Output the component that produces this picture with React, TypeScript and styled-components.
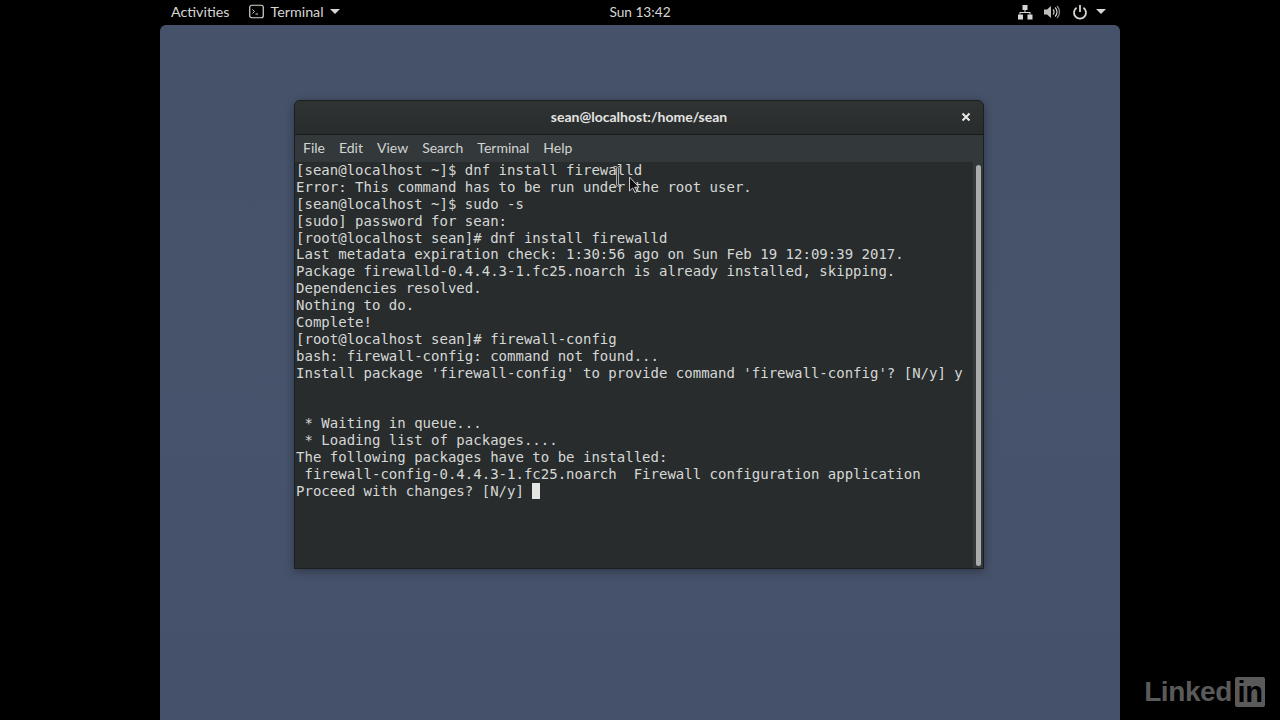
import styled, { createGlobalStyle } from 'styled-components'

const GlobalStyle = createGlobalStyle`
  html, body {
    margin: 0;
    padding: 0;
    width: 1280px;
    height: 720px;
    overflow: hidden;
    background: #000;
  }
`

const Screen = styled.div`
  position: relative;
  width: 1280px;
  height: 720px;
  background: #000;
  display: flex;
  flex-direction: column;
  overflow: hidden;
`
const TopBar = styled.header`
  height: 23px;
  padding-bottom: 2px;
  flex: none;
  display: grid;
  grid-template-columns: 1fr auto 1fr;
  align-items: center;
  padding-left: 171px;
  padding-right: 171px;
  color: #d6d6d3;
  font-family: Lato, sans-serif;
  font-size: 14.3px;
`
const BarLeft = styled.div`
  display: flex;
  align-items: center;
`
const BarItem = styled.span`
  display: flex;
  align-items: center;
  gap: 6px;
  margin-left: 20px;
  &:first-child {
    margin-left: 0;
  }
`
const Clock = styled.span`
  font-size: 13.7px;
`
const BarRight = styled.div`
  display: flex;
  align-items: center;
  justify-content: flex-end;
  gap: 9px;
  margin-right: 3px;
`
const Caret = styled.i<{ $gap?: number }>`
  display: block;
  width: 0;
  height: 0;
  margin-left: ${p => p.$gap ?? 0}px;
  border-left: 5px solid transparent;
  border-right: 5px solid transparent;
  border-top: 5px solid #d6d6d3;
`
const Desktop = styled.main`
  width: 960px;
  flex: 1;
  margin: 0 auto;
  box-sizing: border-box;
  padding: 75px 0 0 134px;
  border-radius: 6px 6px 0 0;
  background: linear-gradient(180deg, #45526a 0%, #46536b 50%, #45516a 100%);
`
const Window = styled.section`
  width: 690px;
  height: 469px;
  box-sizing: border-box;
  display: flex;
  flex-direction: column;
  border: 1px solid #1c1e1f;
  border-radius: 6px 6px 0 0;
  background: #2d3132;
  box-shadow: 0 2px 10px rgba(0, 0, 0, 0.35);
  overflow: hidden;
`
const TitleBar = styled.div`
  height: 30px;
  padding-bottom: 3px;
  flex: none;
  position: relative;
  display: flex;
  align-items: center;
  justify-content: center;
  background: linear-gradient(180deg, #2f3334, #292c2d);
  border-bottom: 1px solid #17191a;
  color: #e4e4e2;
  font-family: Lato, sans-serif;
  font-size: 14px;
  font-weight: 700;
`
const CloseButton = styled.button`
  position: absolute;
  right: 10px;
  top: 9px;
  width: 14px;
  height: 14px;
  padding: 0;
  border: none;
  background: none;
  display: flex;
  align-items: center;
  justify-content: center;
`
const MenuBar = styled.nav`
  height: 27px;
  padding: 0 8px 3px;
  box-sizing: border-box;
  flex: none;
  display: flex;
  align-items: center;
  gap: 14px;
  background: #33383a;
  color: #d2d4d2;
  font-family: Lato, sans-serif;
  font-size: 14px;
`
const TermArea = styled.div`
  flex: 1;
  display: flex;
  min-height: 0;
  background: #33383a;
`
const Term = styled.pre`
  flex: 1;
  margin: 0;
  padding: 0 0 0 1px;
  background: #282c2d;
  color: #d6d8d6;
  font-family: 'DejaVu Sans Mono', monospace;
  font-size: 14px;
  line-height: 16.88px;
  letter-spacing: 0.012px;
  white-space: pre;
  overflow: hidden;
`
const Block = styled.span`
  display: inline-block;
  width: 8px;
  height: 16px;
  vertical-align: -3px;
  background: #e4e6e4;
`
const ScrollTrack = styled.div`
  width: 10px;
  flex: none;
  display: flex;
  justify-content: center;
  padding: 3px 0 2px;
  box-sizing: border-box;
  background: #33383a;
`
const ScrollThumb = styled.div`
  width: 5px;
  height: 100%;
  border-radius: 3px;
  background: #a9acab;
`
const MouseCursors = styled.svg`
  position: absolute;
  left: 610px;
  top: 165px;
`
const Logo = styled.div`
  position: absolute;
  right: 15px;
  top: 677px;
  display: flex;
  align-items: center;
  gap: 3px;
  color: #5a5a5a;
  font-family: 'Liberation Sans', sans-serif;
  font-size: 28px;
  font-weight: 700;
  line-height: 30px;
  letter-spacing: -0.4px;
`
const LogoBox = styled.span`
  width: 30px;
  height: 30px;
  border-radius: 2px;
  background: #5a5a5a;
  color: #000;
  display: flex;
  align-items: flex-end;
  justify-content: center;
  font-size: 29px;
  line-height: 29px;
`

const lines = `[sean@localhost ~]$ dnf install firewalld
Error: This command has to be run under the root user.
[sean@localhost ~]$ sudo -s
[sudo] password for sean: 
[root@localhost sean]# dnf install firewalld
Last metadata expiration check: 1:30:56 ago on Sun Feb 19 12:09:39 2017.
Package firewalld-0.4.4.3-1.fc25.noarch is already installed, skipping.
Dependencies resolved.
Nothing to do.
Complete!
[root@localhost sean]# firewall-config
bash: firewall-config: command not found...
Install package 'firewall-config' to provide command 'firewall-config'? [N/y] y


 * Waiting in queue... 
 * Loading list of packages.... 
The following packages have to be installed:
 firewall-config-0.4.4.3-1.fc25.noarch  Firewall configuration application
Proceed with changes? [N/y] `

const menus = ['File', 'Edit', 'View', 'Search', 'Terminal', 'Help']

const App = (): JSX.Element => (
  <Screen>
    <GlobalStyle />
    <TopBar>
      <BarLeft>
        <BarItem>Activities</BarItem>
        <BarItem>
          <svg width="15" height="15" viewBox="0 0 15 15" fill="none">
            <rect x="0.75" y="1.25" width="13.5" height="12.5" rx="2" stroke="#d6d6d3" strokeWidth="1.2" />
            <path d="M3.5 5.5 L5.5 7.5 L3.5 9.5" stroke="#d6d6d3" strokeWidth="1" />
            <path d="M6.5 10 H9" stroke="#d6d6d3" strokeWidth="1" />
          </svg>
          Terminal
          <Caret />
        </BarItem>
      </BarLeft>
      <Clock>Sun 13:42</Clock>
      <BarRight>
        <svg width="16" height="16" viewBox="0 0 16 16" fill="#d6d6d3">
          <rect x="5.5" y="1" width="5" height="5" />
          <rect x="1" y="10.5" width="5" height="5" />
          <rect x="10.5" y="10.5" width="5" height="5" />
          <path d="M7.5 6h1v2h5v2.5h-1V9H3.5v1.5h-1V8h5z" />
        </svg>
        <svg width="17" height="16" viewBox="0 0 17 16" fill="none" style={{ marginLeft: 1 }}>
          <path d="M1 5.5h3L8 2v12L4 10.500H1z" fill="#bdbdba" />
          <path d="M10 5.500a3.500 3.500 0 0 1 0 5" stroke="#d6d6d3" strokeWidth="1.2" />
          <path d="M12 3.500a6 6 0 0 1 0 9" stroke="#d6d6d3" strokeWidth="1.2" />
          <path d="M14 2a8.500 8.500 0 0 1 0 12" stroke="#8d8d8a" strokeWidth="1.2" />
        </svg>
        <svg width="16" height="16" viewBox="0 0 16 16" fill="none" style={{ marginLeft: 3 }}>
          <path d="M4.600 3.700a6 6 0 1 0 6.800 0" stroke="#d6d6d3" strokeWidth="1.800" />
          <path d="M8 1v7" stroke="#d6d6d3" strokeWidth="1.800" />
        </svg>
        <Caret $gap={-1} />
      </BarRight>
    </TopBar>
    <Desktop>
      <Window>
        <TitleBar>
          sean@localhost:/home/sean
          <CloseButton aria-label="Close">
            <svg width="10" height="10" viewBox="0 0 10 10">
              <path d="M1.500 1.500 L8.500 8.500 M8.500 1.500 L1.500 8.500" stroke="#e8e8e6" strokeWidth="2" />
            </svg>
          </CloseButton>
        </TitleBar>
        <MenuBar>
          {menus.map(m => <span key={m}>{m}</span>)}
        </MenuBar>
        <TermArea>
          <Term>{lines}<Block /></Term>
          <ScrollTrack>
            <ScrollThumb />
          </ScrollTrack>
        </TermArea>
      </Window>
    </Desktop>
    <MouseCursors width="34" height="28" viewBox="0 0 34 28">
      <path d="M3.500 1.500h3l1 1 1-1h3M3.500 21.500h3l1-1 1 1h3M6.500 2.500v18M8.500 2.500v18" stroke="#a8a8a8" strokeWidth="1" fill="none" />
      <path d="M19.500 12v14l3.200-3 2.300 4.500 2-1-2.300-4.300H29z" fill="#111" stroke="#cfcfcf" strokeWidth="1" />
    </MouseCursors>
    <Logo>
      Linked
      <LogoBox>in</LogoBox>
    </Logo>
  </Screen>
)

export default App
